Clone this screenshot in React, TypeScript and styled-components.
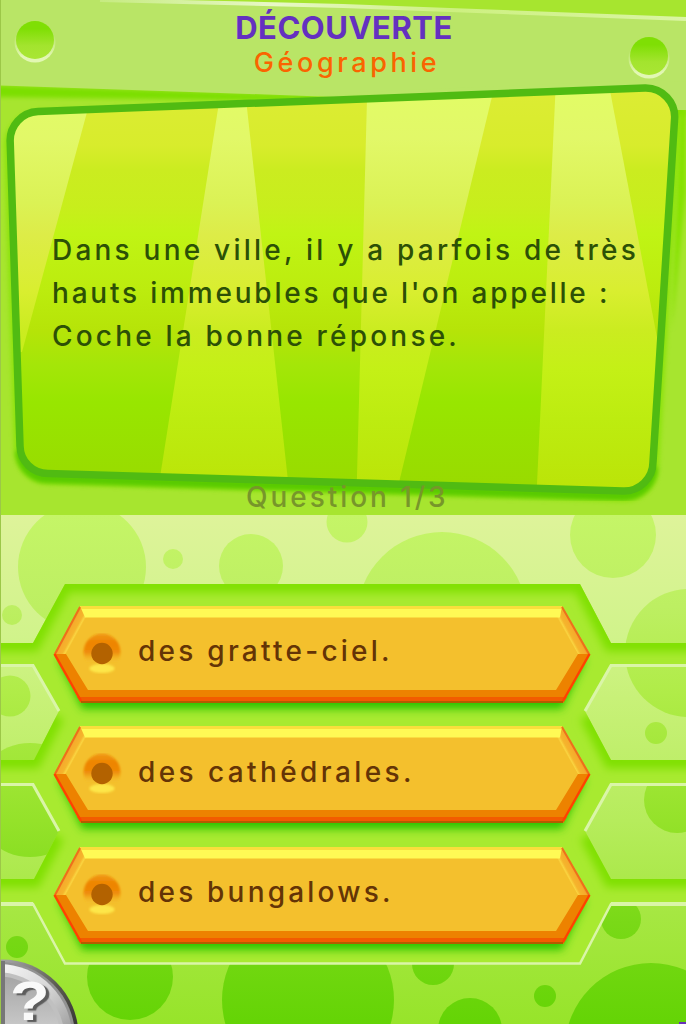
import React, { useState } from "react";
import styled, { createGlobalStyle } from "styled-components";

const GlobalStyle = createGlobalStyle`
  * { box-sizing: border-box; }
  html, body { margin: 0; padding: 0; overflow: hidden; }
  body { font-family: Inter, "Liberation Sans", sans-serif; }
`;

const Console = styled.main`
  display: flex;
  flex-direction: column;
  width: 686px;
  height: 1024px;
  overflow: hidden;
  border-left: 1px solid #9cc748;
`;

const TopScreen = styled.section`
  position: relative;
  display: flex;
  flex-direction: column;
  height: 515px;
  overflow: hidden;
  background: #a7e52f;
`;

const BottomScreen = styled.section`
  position: relative;
  display: flex;
  flex-direction: column;
  height: 509px;
  overflow: hidden;
`;

const Art = styled.svg`
  position: absolute;
  top: 0;
  left: -1px;
  width: 686px;
  height: 100%;
  pointer-events: none;
`;

const Heading = styled.header`
  position: relative;
  display: flex;
  flex-direction: column;
  align-items: center;
  height: 86px;
  padding-top: 10px;
`;

const Category = styled.h1`
  margin: 0;
  padding-left: 1px;
  font-size: 31px;
  font-weight: 700;
  line-height: 36px;
  letter-spacing: 0.5px;
  color: #6430c0;
`;

const Subject = styled.h2`
  margin: 0;
  padding-left: 7px;
  font-size: 27px;
  font-weight: 500;
  line-height: 33px;
  letter-spacing: 3.6px;
  color: #fa6400;
`;

const Question = styled.div`
  position: relative;
  flex: 1;
  padding: 143px 0 0 51px;
`;

const Line = styled.p<{ $spacing: number }>`
  margin: 0;
  font-size: 28px;
  font-weight: 500;
  line-height: 43px;
  letter-spacing: ${(p) => p.$spacing}px;
  white-space: nowrap;
  color: #2c5006;
`;

const Progress = styled.footer`
  position: relative;
  height: 33px;
  padding-left: 245px;
  font-size: 28px;
  font-weight: 500;
  line-height: 30px;
  letter-spacing: 2.95px;
  white-space: nowrap;
  color: #77962a;
`;

const Answers = styled.div`
  position: relative;
  display: flex;
  flex-direction: column;
  gap: 23.5px;
  padding: 90.5px 0 0 52px;
`;

const AnswerButton = styled.button`
  position: relative;
  display: flex;
  align-items: center;
  width: 538px;
  height: 97px;
  padding: 0 0 6px 27px;
  border: 0;
  background: none;
  font: inherit;
  cursor: pointer;
`;

const Plate = styled.svg`
  position: absolute;
  top: 0;
  left: 0;
  width: 538px;
  height: 112px;
  overflow: visible;
`;

const Socket = styled.svg`
  width: 44px;
  height: 44px;
  margin-top: 7px;
  z-index: 1;
`;

const AnswerText = styled.span<{ $spacing: number }>`
  z-index: 1;
  padding-left: 14px;
  font-size: 28px;
  font-weight: 500;
  line-height: 40px;
  letter-spacing: ${(p) => p.$spacing}px;
  white-space: nowrap;
  color: #643406;
`;

const HelpButton = styled.button`
  position: absolute;
  left: -1px;
  bottom: 0;
  width: 80px;
  height: 65px;
  padding: 0;
  border: 0;
  background: none;
  overflow: hidden;
  cursor: pointer;
`;

const HelpArt = styled.svg`
  position: absolute;
  inset: 0;
`;

const HelpMark = styled.span`
  position: absolute;
  left: 10px;
  top: 15px;
  font-family: "Liberation Sans", sans-serif;
  font-size: 55px;
  font-weight: 700;
  line-height: 50px;
  color: #fafafa;
  text-shadow: 3px 2px 1px #5c5c5c;
  transform: translateY(2px) scaleX(1.18);
  transform-origin: left;
`;

const FRAME =
  "M38 111.5 L645 88 A29 29 0 0 1 674.5 120 L653 462 A29 29 0 0 1 623 491 L48 473.5 A28 28 0 0 1 20 446 L10.2 142 A29 29 0 0 1 38 111.5Z";

const Hole = ({ x, y }: { x: number; y: number }) => (
  <g>
    <circle cx={x} cy={y + 2} r="20.5" fill="url(#holeRim)" />
    <circle cx={x} cy={y} r="19" fill="url(#hole)" />
  </g>
);

const BoardArt = () => (
  <Art viewBox="0 0 686 515">
    <defs>
      <linearGradient id="hole" x1="0" y1="0" x2="0" y2="1">
        <stop offset="0.2" stopColor="#7fdf04" />
        <stop offset="0.65" stopColor="#a3e42e" />
        <stop offset="1" stopColor="#a9e634" />
      </linearGradient>
      <linearGradient id="holeRim" x1="0" y1="0" x2="0" y2="1">
        <stop offset="0.3" stopColor="#d8f3a0" stopOpacity="0" />
        <stop offset="0.85" stopColor="#e2f7b4" />
      </linearGradient>
      <linearGradient id="edge" x1="100" x2="686" y1="0" y2="0" gradientUnits="userSpaceOnUse">
        <stop offset="0" stopColor="#c6eb80" />
        <stop offset="0.3" stopColor="#e8f8c8" />
        <stop offset="0.6" stopColor="#cdf080" />
        <stop offset="1" stopColor="#daf5a4" />
      </linearGradient>
      <linearGradient id="dark" x1="0" x2="0" y1="90" y2="490" gradientUnits="userSpaceOnUse">
        <stop offset="0" stopColor="#dcec34" />
        <stop offset="0.14" stopColor="#d8ec2c" />
        <stop offset="0.2" stopColor="#cbec20" />
        <stop offset="0.29" stopColor="#c8ee1c" />
        <stop offset="0.36" stopColor="#c0f414" />
        <stop offset="0.5" stopColor="#bcec0e" />
        <stop offset="0.6" stopColor="#b6e408" />
        <stop offset="0.69" stopColor="#a4e608" />
        <stop offset="0.78" stopColor="#98e600" />
        <stop offset="1" stopColor="#99da00" />
      </linearGradient>
      <linearGradient id="light" x1="0" x2="0" y1="90" y2="490" gradientUnits="userSpaceOnUse">
        <stop offset="0" stopColor="#e2fc66" />
        <stop offset="0.12" stopColor="#e2f868" />
        <stop offset="0.28" stopColor="#dbf255" />
        <stop offset="0.36" stopColor="#ddec48" />
        <stop offset="0.5" stopColor="#d9ee30" />
        <stop offset="0.6" stopColor="#cbec20" />
        <stop offset="0.7" stopColor="#c4f016" />
        <stop offset="0.82" stopColor="#bdec10" />
        <stop offset="1" stopColor="#bbe408" />
      </linearGradient>
      <filter id="slight"><feGaussianBlur stdDeviation="2" /></filter>
      <clipPath id="frame"><path d={FRAME} /></clipPath>
    </defs>
    <path d="M-10 85 L300 95 L686 108 L686 116 L300 101 L-10 97Z" fill="#7bdf00" filter="url(#slight)" />
    <path d="M0 0 L100 0 L343 5 L686 18 L686 110 L280 95 L0 85.5Z" fill="#b9e566" />
    <path d="M100 0 L343 6 L686 19" fill="none" stroke="url(#edge)" strokeWidth="4" />
    <path d="M680 110 L686 110 V190 L672 330Z" fill="#86e200" filter="url(#slight)" />
    <path d={FRAME} fill="none" stroke="#84e200" strokeWidth="12" filter="url(#slight)" transform="translate(0 5)" opacity="0.75" />
    <path d="M290 95 L646 80 L686 82 V110 H676 L640 92Z" fill="#b9e566" />
    <Hole x={35} y={40} />
    <Hole x={649} y={56} />
    <path d="M20 446 A28 28 0 0 0 48 473.5 L623 491 A29 29 0 0 0 653 462" fill="none" stroke="#58ca00" strokeWidth="9" transform="translate(0 5)" filter="url(#slight)" />
    <g clipPath="url(#frame)">
      <rect y="80" width="686" height="420" fill="url(#dark)" />
      <g fill="url(#light)">
        <path d="M0 90H93L22 352H0Z" />
        <path d="M221 90H245L289 490H158Z" />
        <path d="M367.5 80H496L396 495H356.5Z" />
        <path d="M556 80H608L687 495H536.5Z" />
      </g>
    </g>
    <path d={FRAME} fill="none" stroke="#50bb12" strokeWidth="7.5" />
  </Art>
);

const BUBBLES: [number, number, number][] = [
  [82, 567, 64], [173, 559, 10], [251, 566, 32], [347, 522, 20.5], [442, 617, 85],
  [613, 535, 43], [689, 653, 64], [12, 615, 10], [10, 696, 20.5], [656, 733, 11],
  [30, 800, 57], [677, 800, 33], [17, 947, 11], [621, 919, 20], [130, 977, 43],
  [308, 1000, 86], [433, 964, 21], [470, 1030, 32], [545, 996, 11], [651, 1049, 86],
];

const CHANNEL =
  "M0 643H33L65 584H580L611 643H686V664H611L585 711L611 760H686V784H611L585 831L611 879H686V903H611L580 963H65L33 903H0V879H34L59 831L33 784H0V760H34L59 711L33 664H0Z";

const SHADED_EDGES = [
  "M-9 643H33L65 584H580L611 643H695",
  "M57 715L34 760H-9",
  "M587 715L611 760H695",
  "M57 835L34 879H-9",
  "M587 835L611 879H695",
];

const LIT_EDGES = [
  "M0 665.5H33L59 711",
  "M686 665.5H611L585 711",
  "M0 784.5H33L59 831",
  "M686 784.5H611L585 831",
];

const HiveArt = () => (
  <Art viewBox="0 515 686 509">
    <defs>
      <linearGradient id="sky" x1="0" x2="0" y1="515" y2="1024" gradientUnits="userSpaceOnUse">
        <stop offset="0" stopColor="#def39a" />
        <stop offset="0.24" stopColor="#d1f38b" />
        <stop offset="0.36" stopColor="#c8f178" />
        <stop offset="0.6" stopColor="#b6ec5c" />
        <stop offset="0.78" stopColor="#a6e742" />
        <stop offset="1" stopColor="#97e42a" />
      </linearGradient>
      <linearGradient id="bubble" x1="0" x2="0" y1="515" y2="1024" gradientUnits="userSpaceOnUse">
        <stop offset="0" stopColor="#c5f567" />
        <stop offset="0.18" stopColor="#bdef62" />
        <stop offset="0.35" stopColor="#b0ec48" />
        <stop offset="0.6" stopColor="#95e22a" />
        <stop offset="0.8" stopColor="#7ad917" />
        <stop offset="1" stopColor="#64d405" />
      </linearGradient>
      <clipPath id="channel"><path d={CHANNEL} /></clipPath>
      <filter id="shade" x="-20%" y="-50%" width="140%" height="200%"><feGaussianBlur stdDeviation="4" /></filter>
    </defs>
    <rect y="515" width="686" height="509" fill="url(#sky)" />
    <g fill="url(#bubble)">
      {BUBBLES.map(([x, y, r]) => <circle key={`${x}-${y}`} cx={x} cy={y} r={r} />)}
    </g>
    <path d={CHANNEL} fill="#a8ea30" />
    <g clipPath="url(#channel)" fill="none" stroke="#7fe000" strokeWidth="15">
      {SHADED_EDGES.map((d) => <path key={d} d={d} filter="url(#shade)" transform="translate(0 1)" />)}
    </g>
    <g fill="none" stroke="#daf5a8" strokeWidth="3">
      {LIT_EDGES.map((d) => <path key={d} d={d} />)}
      <path d="M0 904H33L65 963.5H580L611 904H686" strokeWidth="2.5" />
      <path d="M0 904H33M611 904H686" strokeWidth="4" />
    </g>
    <rect x="679" y="1022" width="7" height="2" fill="#6733b8" />
  </Art>
);

const FacetStops = () => (
  <>
    <stop offset="0" stopColor="#f08010" />
    <stop offset="0.35" stopColor="#f5ac2c" />
    <stop offset="0.7" stopColor="#f5b52c" />
    <stop offset="0.88" stopColor="#fad440" />
    <stop offset="1" stopColor="#f4c02d" />
  </>
);

const PlateArt = () => (
  <Plate viewBox="0 0 538 112">
    <defs>
      <linearGradient id="facetL" x1="12" y1="24" x2="23" y2="30" gradientUnits="userSpaceOnUse">
        <FacetStops />
      </linearGradient>
      <linearGradient id="facetR" x1="525" y1="24" x2="514" y2="30" gradientUnits="userSpaceOnUse">
        <FacetStops />
      </linearGradient>
      <filter id="drop" x="-10%" y="-20%" width="120%" height="150%"><feGaussianBlur stdDeviation="4" /></filter>
    </defs>
    <path d="M6 55L29 20H509L532 55L509 103H29Z" fill="#2ec400" filter="url(#drop)" />
    <path d="M1 48L27 0H509L537 48L510 97H28Z" fill="#f4c02d" />
    <path d="M1 48L27 0L34 11L13 48Z" fill="url(#facetL)" />
    <path d="M537 48L509 0L503 11L525 48Z" fill="url(#facetR)" />
    <path d="M27 0H509L507 11.5H32Z" fill="#fffa55" />
    <path d="M27 0H509V3H28Z" fill="#f9de3c" />
    <path d="M1 48L28 97H510L537 48H525L503 84H35L13 48Z" fill="#ed8200" />
    <path d="M24 91H514L510 97H28Z" fill="#f25c00" />
    <path d="M28 96H510" stroke="#b35c00" strokeWidth="2" />
    <path d="M27 1L2 48M509 1L536 48" stroke="#ed701c" strokeWidth="2" />
    <path d="M1.5 48L28 95M536.5 48L510 95" stroke="#ff4200" strokeWidth="2.5" />
  </Plate>
);

const SocketArt = ({ checked }: { checked: boolean }) => (
  <Socket viewBox="0 0 44 44">
    <defs>
      <linearGradient id="halo" x1="0" x2="0" y1="0" y2="1">
        <stop offset="0" stopColor="#f09a18" />
        <stop offset="0.25" stopColor="#ee8400" />
        <stop offset="0.5" stopColor="#ef8a08" />
        <stop offset="0.8" stopColor="#f4c02d" stopOpacity="0" />
      </linearGradient>
      <filter id="haze"><feGaussianBlur stdDeviation="0.8" /></filter>
    </defs>
    <circle cx="22" cy="19" r="18.5" fill="url(#halo)" filter="url(#haze)" />
    <ellipse cx="22" cy="35.5" rx="12.5" ry="4.5" fill="#fde648" filter="url(#haze)" />
    <circle cx="22" cy="20.5" r="10.7" fill={checked ? "#7a3c00" : "#b36200"} />
  </Socket>
);

const LINES = [
  { text: "Dans une ville, il y a parfois de très", spacing: 3.22 },
  { text: "hauts immeubles que l'on appelle :", spacing: 2.8 },
  { text: "Coche la bonne réponse.", spacing: 3.2 },
];

const ANSWERS = [
  { text: "des gratte-ciel.", spacing: 3.25 },
  { text: "des cathédrales.", spacing: 3.4 },
  { text: "des bungalows.", spacing: 3.2 },
];

export default function App() {
  const [selected, setSelected] = useState<number | null>(null);
  return (
    <>
      <GlobalStyle />
      <Console>
        <TopScreen>
          <BoardArt />
          <Heading>
            <Category>DÉCOUVERTE</Category>
            <Subject>Géographie</Subject>
          </Heading>
          <Question>
            {LINES.map((l) => <Line key={l.text} $spacing={l.spacing}>{l.text}</Line>)}
          </Question>
          <Progress>Question 1/3</Progress>
        </TopScreen>
        <BottomScreen>
          <HiveArt />
          <Answers>
            {ANSWERS.map((a, i) => (
              <AnswerButton key={a.text} onClick={() => setSelected(i)}>
                <PlateArt />
                <SocketArt checked={selected === i} />
                <AnswerText $spacing={a.spacing}>{a.text}</AnswerText>
              </AnswerButton>
            ))}
          </Answers>
          <HelpButton aria-label="Aide">
            <HelpArt width="80" height="65" viewBox="0 0 80 65">
              <defs>
                <linearGradient id="metal" x1="10" y1="5" x2="75" y2="65" gradientUnits="userSpaceOnUse">
                  <stop offset="0" stopColor="#f2f2f2" />
                  <stop offset="0.5" stopColor="#d6d6d6" />
                  <stop offset="1" stopColor="#a0a0a0" />
                </linearGradient>
                <linearGradient id="face" x1="0" y1="15" x2="0" y2="65" gradientUnits="userSpaceOnUse">
                  <stop offset="0" stopColor="#a4a4a4" />
                  <stop offset="1" stopColor="#c6c6c6" />
                </linearGradient>
                <linearGradient id="rim" x1="10" y1="0" x2="75" y2="60" gradientUnits="userSpaceOnUse">
                  <stop offset="0" stopColor="#a0a0a0" />
                  <stop offset="0.6" stopColor="#5a5a50" />
                  <stop offset="1" stopColor="#3c3c38" />
                </linearGradient>
              </defs>
              <circle cx="2" cy="77" r="76.5" fill="url(#rim)" />
              <circle cx="0" cy="78" r="75" fill="#929292" />
              <circle cx="-1" cy="78" r="73" fill="url(#metal)" />
              <circle cx="-4" cy="82" r="69" fill="#c0c0c0" />
              <circle cx="-4" cy="82" r="65" fill="url(#face)" />
              <rect y="2" width="5" height="63" fill="#777" />
            </HelpArt>
            <HelpMark>?</HelpMark>
          </HelpButton>
        </BottomScreen>
      </Console>
    </>
  );
}
